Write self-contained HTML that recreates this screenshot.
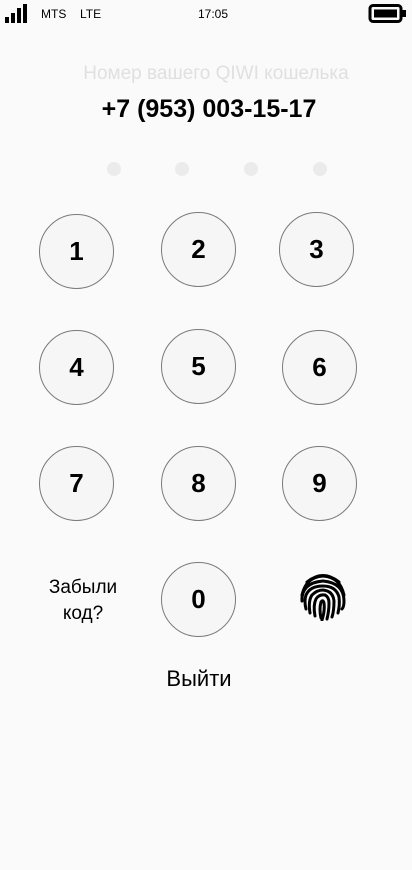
<!DOCTYPE html>
<html><head><meta charset="utf-8"><style>
body{margin:0;width:412px;height:870px;background:#fafafa;font-family:"Liberation Sans","DejaVu Sans",sans-serif;position:relative;overflow:hidden;color:#000}
.a{position:absolute}
.k{position:absolute;width:73px;height:73px;border:1px solid #7a7a7a;border-radius:50%;background:#f6f6f6;display:flex;align-items:center;justify-content:center;font-size:26px;font-weight:bold;box-sizing:content-box}
.d{position:absolute;width:14px;height:14px;border-radius:50%;background:#ecebeb;top:162px}
</style></head><body>
<svg class="a" style="left:5px;top:3px" width="28" height="22"><rect x="0" y="14" width="4" height="6" fill="#000"/><rect x="6" y="10" width="4" height="10" fill="#000"/><rect x="12" y="5" width="4" height="15" fill="#000"/><rect x="18" y="1" width="4" height="19" fill="#000"/></svg>
<div class="a" style="left:41px;top:7px;font-size:12px">MTS</div>
<div class="a" style="left:80px;top:7px;font-size:12px">LTE</div>
<div class="a" style="left:198px;top:7px;font-size:12px">17:05</div>
<svg class="a" style="left:368px;top:4px" width="40" height="20"><rect x="2" y="1.5" width="31" height="16" rx="3" fill="none" stroke="#000" stroke-width="3"/><rect x="6" y="5.5" width="23" height="8" fill="#000"/><rect x="34" y="6" width="4" height="7" fill="#000"/></svg>
<div class="a" style="left:0;width:432px;top:63px;text-align:center;font-size:19px;color:#e0e0e0">Номер вашего QIWI кошелька</div>
<div class="a" style="left:0;width:418px;top:95px;text-align:center;font-size:25px;font-weight:bold">+7 (953) 003-15-17</div>
<div class="d" style="left:107px"></div><div class="d" style="left:175px"></div><div class="d" style="left:244px"></div><div class="d" style="left:313px"></div>
<div class="k" style="left:39px;top:214px">1</div>
<div class="k" style="left:161px;top:212px">2</div>
<div class="k" style="left:279px;top:212px">3</div>
<div class="k" style="left:39px;top:330px">4</div>
<div class="k" style="left:161px;top:329px">5</div>
<div class="k" style="left:282px;top:330px">6</div>
<div class="k" style="left:39px;top:446px">7</div>
<div class="k" style="left:161px;top:446px">8</div>
<div class="k" style="left:282px;top:446px">9</div>
<div class="k" style="left:161px;top:562px">0</div>
<div class="a" style="left:36px;width:94px;top:575px;text-align:center;font-size:19px;line-height:26px">Забыли<br>код?</div>
<svg class="a" style="left:298px;top:571px" width="50" height="50" viewBox="0 0 50 50" fill="none" stroke="#000" stroke-width="3" stroke-linecap="round">
<path d="M9 11 Q25 -2 41 11"/>
<path d="M4 24 Q8 6 25 5 Q42 6 46 24"/>
<path d="M4 30 Q3 12 25 10 Q46 12 46 30 Q46 36 44 38"/>
<path d="M8 38 Q6 30 8 24 Q12 15 25 15 Q38 15 41 26 Q42 34 40 42"/>
<path d="M12 42 Q10 30 14 24 Q19 19 25 19 Q35 20 36 30 Q36 40 34 46"/>
<path d="M17 45 Q15 34 18 28 Q21 23 27 24 Q31 26 31 32 Q31 40 29 48"/>
<path d="M23 47 Q21 38 23 31 Q25 28 26 32 Q27 40 24 49"/>
</svg>
<div class="a" style="left:0;width:398px;top:666px;text-align:center;font-size:22px">Выйти</div>
</body></html>
